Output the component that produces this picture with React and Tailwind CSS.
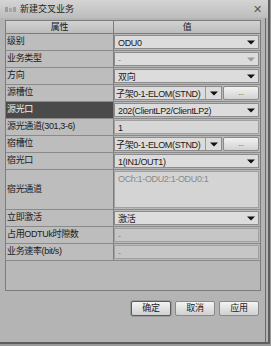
import React from 'react';

const font = { fontFamily: '"Liberation Sans", "Noto Sans CJK SC", sans-serif' };

function Arrow({ muted }) {
  return (
    <svg width="8" height="5" viewBox="0 0 8 5">
      <path d="M0 0.5 H8 L4 4.5 Z" fill={muted ? '#9a9a9a' : '#111'} />
    </svg>
  );
}

function Combo({ value, muted, className = '' }) {
  return (
    <div className={`flex h-full items-stretch border border-[#8c8c8c] bg-[#dcdcdc] ${className}`}>
      <span className={`flex-1 truncate pl-[3px] leading-[14px] ${muted ? 'text-[#8a8a8a]' : 'text-[#1a1a1a]'}`}>{value}</span>
      <span className="flex w-[14px] items-center justify-center">
        <Arrow muted={muted} />
      </span>
    </div>
  );
}

function SlotCell({ value }) {
  return (
    <div className="flex h-full gap-[1px]">
      <div className="flex w-[108px] items-stretch border border-[#8c8c8c] bg-[#dcdcdc]">
        <span className="flex-1 truncate pl-[1px] leading-[14px] text-[#1a1a1a]">{value}</span>
        <span className="flex w-[16px] items-center justify-center border-l border-[#9a9a9a]">
          <Arrow />
        </span>
      </div>
      <div className="flex flex-1 items-center justify-center rounded-[2px] border border-[#8a8a8a] bg-gradient-to-b from-[#f2f2f2] to-[#d2d2d2] text-[8px] leading-none text-[#555]">
        ...
      </div>
    </div>
  );
}

function Field({ value, muted, bg = 'bg-[#d6d6d6]' }) {
  return (
    <div className={`h-full border border-[#a0a0a0] ${bg} pl-[3px] leading-[14px] ${muted ? 'text-[#8a8a8a]' : 'text-[#1a1a1a]'}`}>
      {value}
    </div>
  );
}

const rows = [
  { label: '级别', cell: <Combo value="ODU0" /> },
  { label: '业务类型', cell: <Combo value="-" muted className="bg-[#cfcfcf]" /> },
  { label: '方向', cell: <Combo value="双向" /> },
  { label: '源槽位', cell: <SlotCell value="子架0-1-ELOM(STND)" /> },
  { label: '源光口', dark: true, cell: <Combo value="202(ClientLP2/ClientLP2)" /> },
  { label: '源光通道(301,3-6)', cell: <Field value="1" /> },
  { label: '宿槽位', cell: <SlotCell value="子架0-1-ELOM(STND)" /> },
  { label: '宿光口', cell: <Combo value="1(IN1/OUT1)" /> },
  {
    label: '宿光通道',
    tall: true,
    cell: (
      <div className="h-full border border-[#a0a0a0] bg-[#d4d4d4] pl-[3px] pt-[1px] leading-[13px] text-[#8a8a8a]">
        OCh:1-ODU2:1-ODU0:1
      </div>
    ),
  },
  { label: '立即激活', cell: <Combo value="激活" /> },
  { label: '占用ODTUk时隙数', cell: <Field value="-" muted bg="bg-[#c6c6c6]" /> },
  { label: '业务速率(bit/s)', cell: <Field value="-" muted bg="bg-[#c6c6c6]" /> },
];

export default function App() {
  return (
    <div className="h-[346px] w-[271px] bg-[#9a9a9a] text-[9px] tracking-[-0.35px]" style={font}>
      <div className="flex h-[344px] w-[270px] flex-col border-r-2 border-b-2 border-[#5e5e5e] bg-[#b4b4b4]">
        {/* title bar */}
        <div className="flex h-[18px] items-center bg-gradient-to-b from-[#d4d4d4] to-[#bdbdbd] pl-[5px] pr-[6px]">
          <svg width="12" height="7" viewBox="0 0 12 7" className="mr-[3px]">
            <rect x="0" y="1" width="3" height="5" fill="#9c9c9c" />
            <rect x="4" y="2" width="3" height="4" fill="#a8a8a8" />
            <rect x="8" y="1" width="3" height="5" fill="#a0a0a0" />
          </svg>
          <span className="flex-1 text-[9px] leading-none tracking-normal text-[#1e1e1e]">新建交叉业务</span>
          <span className="text-[11px] leading-none text-[#555]">✕</span>
        </div>

        <div className="flex flex-1 pr-[2px]">
          <div className="flex flex-1 flex-col border-r border-[#6a6a6a] pr-[4px]">
            {/* table */}
            <div className="ml-[5px] mt-[2px] flex h-[271px] flex-col border border-[#7c7c7c] bg-[#b8b8b8]">
              <div className="flex h-[13px] border-b border-[#7c7c7c] bg-gradient-to-b from-[#d2d2d2] to-[#bcbcbc] leading-[12px] text-[#1a1a1a]">
                <div className="w-[108px] border-r border-[#7c7c7c] text-center">属性</div>
                <div className="flex-1 text-center">值</div>
              </div>
              {rows.map((r) => (
                <div
                  key={r.label}
                  className={`flex border-b border-[#8a8a8a] ${r.tall ? 'h-[40px]' : 'h-[17px]'}`}
                >
                  <div
                    className={`flex w-[108px] items-center border-r border-[#7c7c7c] pl-[1px] ${
                      r.dark ? 'bg-[#4a4a4a] text-[#f0f0f0]' : 'bg-[#bdbdbd] text-[#1a1a1a]'
                    }`}
                  >
                    {r.label}
                  </div>
                  <div className="flex-1 py-[1px] pr-[1px]">{r.cell}</div>
                </div>
              ))}
              <div className="flex-1" />
            </div>

            {/* buttons */}
            <div className="mt-[10px] flex justify-end gap-[4px] pr-[2px]">
              {['确定', '取消', '应用'].map((b, i) => (
                <div
                  key={b}
                  className={`flex h-[15px] w-[40px] items-center justify-center rounded-[2px] border bg-gradient-to-b from-[#f4f4f4] to-[#d0d0d0] leading-none text-[#1a1a1a] ${
                    i === 0 ? 'border-[#5a5a5a] shadow-[0_0_0_1px_#9a9a9a]' : 'border-[#8a8a8a]'
                  }`}
                >
                  {b}
                </div>
              ))}
            </div>
          </div>
        </div>
      </div>
    </div>
  );
}
